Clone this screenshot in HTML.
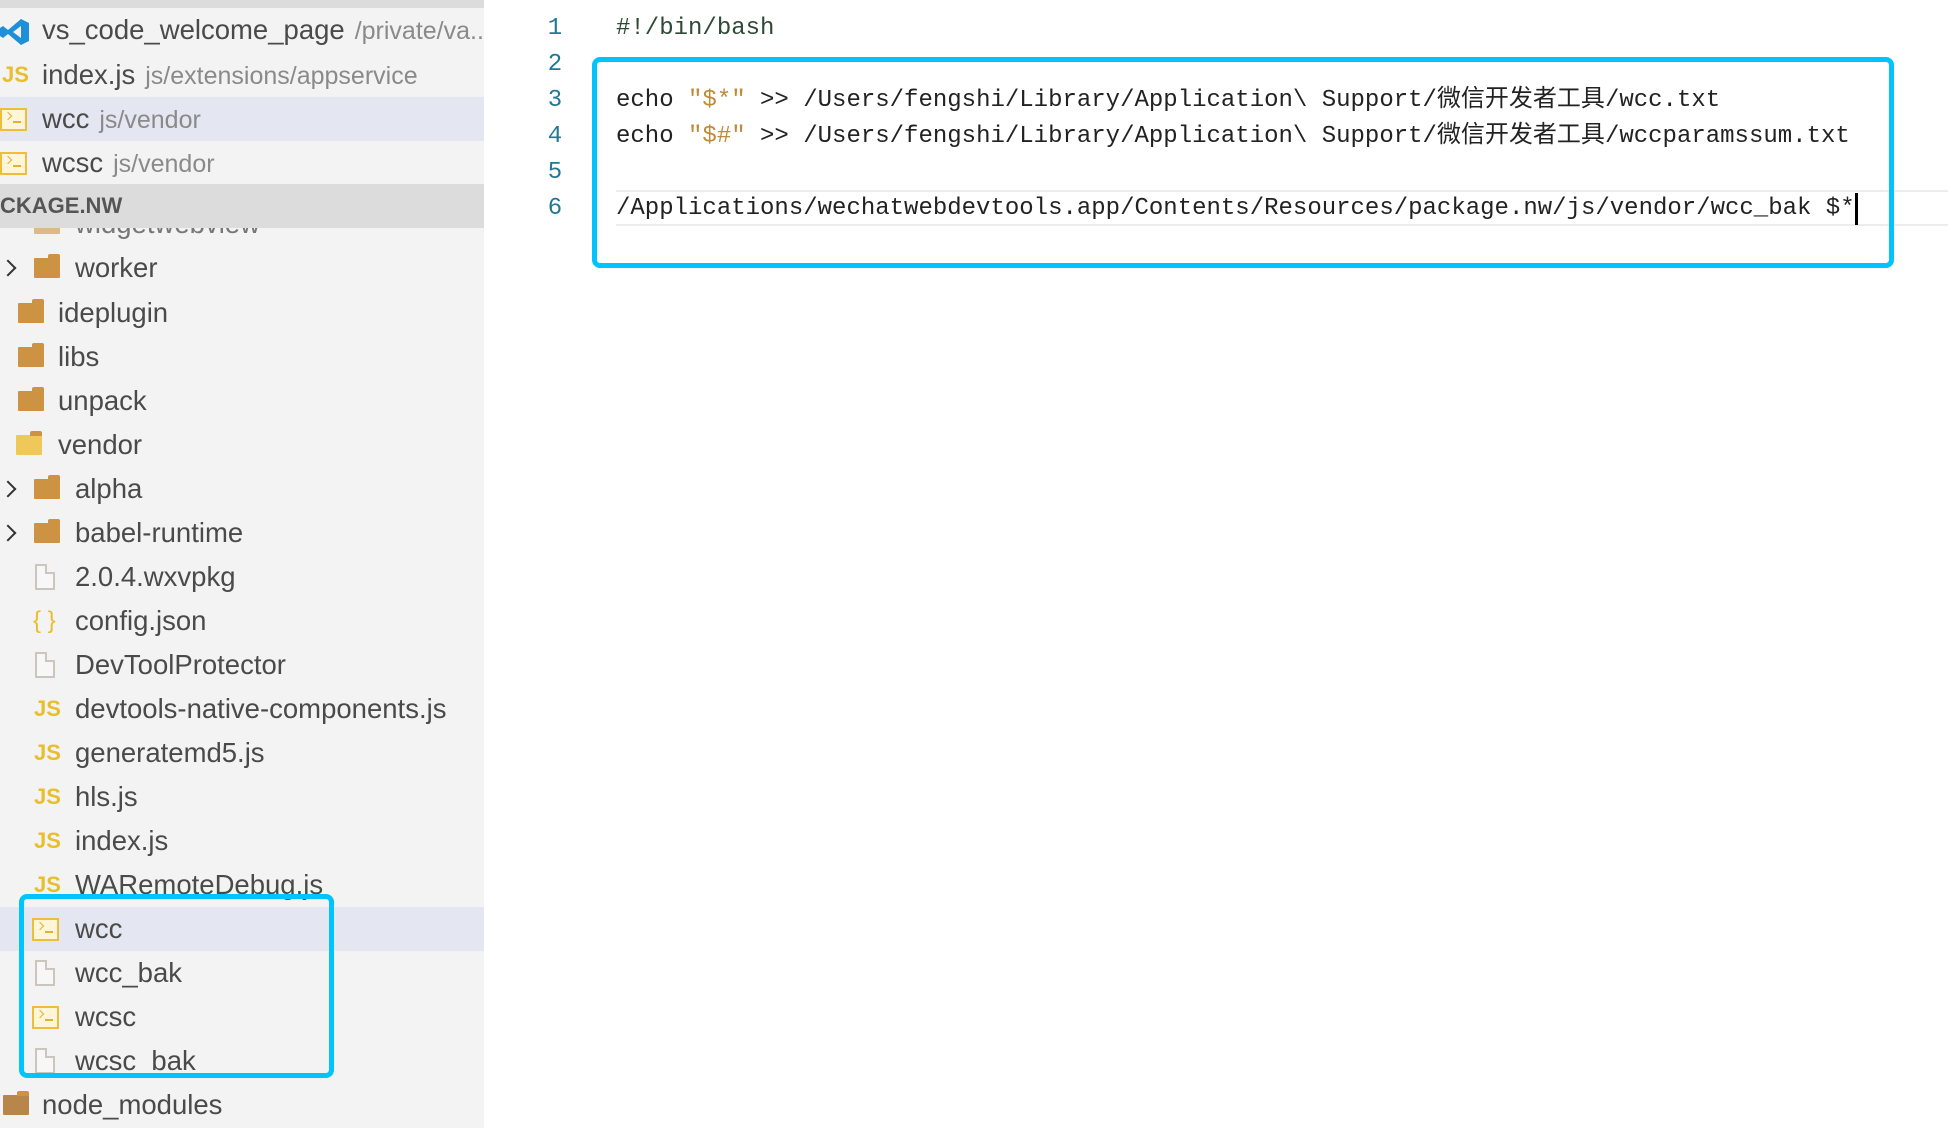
<!DOCTYPE html>
<html><head><meta charset="utf-8">
<style>
*{margin:0;padding:0;box-sizing:border-box}
body{width:1948px;height:1128px;overflow:hidden;background:#fff;font-family:"Liberation Sans","Noto Sans CJK SC",sans-serif;position:relative}
#side{position:absolute;left:0;top:0;width:484px;height:1128px;background:#f3f3f3;overflow:hidden}
.row{position:absolute;left:0;width:484px;height:44px;font-size:27.5px;color:#4a4a4a;line-height:44px;white-space:nowrap}
.row .t{position:absolute;top:0}
.dim{color:#8a8a8a;font-size:25px;margin-left:10px}
.ico{position:absolute}
.sel{background:#e4e6f1}
.chev{position:absolute;left:2px;top:16px;width:12px;height:12px;border-right:2px solid #333;border-top:2px solid #333;transform:rotate(45deg)}
.folder{width:26px;height:20px;top:12px;background:#cd9342;border-radius:1px}
.folder:before{content:"";position:absolute;left:14px;top:-4px;width:12px;height:5px;background:#cd9342;border-radius:2px 2px 0 0}
.file{width:20px;height:26px;top:9px;border:2px solid #cbc6bd;background:#f7f7f7}
.file:after{content:"";position:absolute;right:-2px;top:-2px;width:8px;height:8px;background:#f3f3f3;border-left:2px solid #cbc6bd;border-bottom:2px solid #cbc6bd}
.js{font-weight:bold;color:#e9be2c;font-size:22px;top:0}
.term{width:27px;height:23px;top:11px;border:2px solid #efbd37;background:#fff5d8}
.term:before{content:"";position:absolute;left:3px;top:3px;width:5px;height:5px;border-right:1.5px solid #e6b030;border-bottom:1.5px solid #e6b030;transform:rotate(-45deg)}
.term:after{content:"";position:absolute;left:11px;top:11px;width:8px;height:1.5px;background:#e6b030}
#code{position:absolute;left:0;top:3px;font-family:"Liberation Mono","Noto Sans CJK SC",monospace;font-size:24px}
.ln{position:absolute;left:530px;width:50px;text-align:center;color:#237893;height:36px;line-height:36px}
.cl{position:absolute;left:616px;height:36px;line-height:36px;color:#222;white-space:pre}
.str{color:#c08a36}
.cjk{letter-spacing:0}
</style></head><body>
<div id="side">
  <div style="position:absolute;left:0;top:0;width:484px;height:8px;background:#dcdcdc"></div>
  <div class="row" style="top:8px">
    <svg class="ico" style="left:0;top:9px" width="30" height="30" viewBox="0 0 30 30"><path d="M21 2 L29 6 V24 L21 28 L8 17 L3 21 L0 19 V11 L3 9 L8 13 Z M21 9 L13 15 L21 21 Z" fill="#1e8fd8"/></svg>
    <span class="t" style="left:42px">vs_code_welcome_page<span class="dim">/private/va...</span></span></div>
  <div class="row" style="top:53px"><span class="ico js" style="left:2px">JS</span><span class="t" style="left:42px">index.js<span class="dim">js/extensions/appservice</span></span></div>
  <div class="row sel" style="top:97px"><span class="ico term" style="left:0"></span><span class="t" style="left:42px">wcc<span class="dim">js/vendor</span></span></div>
  <div class="row" style="top:141px"><span class="ico term" style="left:0"></span><span class="t" style="left:42px">wcsc<span class="dim">js/vendor</span></span></div>
  <div class="row" style="top:202px;color:#777"><span class="ico folder" style="left:34px;opacity:.6"></span><span class="t" style="left:75px">widgetwebview</span></div>
  <div style="position:absolute;left:0;top:184px;width:484px;height:44px;background:#dcdcdc;font-weight:bold;font-size:22px;color:#555;line-height:44px">CKAGE.NW</div>

  <div class="row" style="top:246px"><span class="chev"></span><span class="ico folder" style="left:34px"></span><span class="t" style="left:75px">worker</span></div>
  <div class="row" style="top:291px"><span class="ico folder" style="left:18px"></span><span class="t" style="left:58px">ideplugin</span></div>
  <div class="row" style="top:335px"><span class="ico folder" style="left:18px"></span><span class="t" style="left:58px">libs</span></div>
  <div class="row" style="top:379px"><span class="ico folder" style="left:18px"></span><span class="t" style="left:58px">unpack</span></div>
  <div class="row" style="top:423px"><span class="ico folder" style="left:16px;background:#f0c85a"></span><span class="t" style="left:58px">vendor</span></div>
  <div class="row" style="top:467px"><span class="chev"></span><span class="ico folder" style="left:34px"></span><span class="t" style="left:75px">alpha</span></div>
  <div class="row" style="top:511px"><span class="chev"></span><span class="ico folder" style="left:34px"></span><span class="t" style="left:75px">babel-runtime</span></div>
  <div class="row" style="top:555px"><span class="ico file" style="left:35px"></span><span class="t" style="left:75px">2.0.4.wxvpkg</span></div>
  <div class="row" style="top:599px"><span class="ico" style="left:33px;color:#e9be2c;font-size:24px">{ }</span><span class="t" style="left:75px">config.json</span></div>
  <div class="row" style="top:643px"><span class="ico file" style="left:35px"></span><span class="t" style="left:75px">DevToolProtector</span></div>
  <div class="row" style="top:687px"><span class="ico js" style="left:34px">JS</span><span class="t" style="left:75px">devtools-native-components.js</span></div>
  <div class="row" style="top:731px"><span class="ico js" style="left:34px">JS</span><span class="t" style="left:75px">generatemd5.js</span></div>
  <div class="row" style="top:775px"><span class="ico js" style="left:34px">JS</span><span class="t" style="left:75px">hls.js</span></div>
  <div class="row" style="top:819px"><span class="ico js" style="left:34px">JS</span><span class="t" style="left:75px">index.js</span></div>
  <div class="row" style="top:863px"><span class="ico js" style="left:34px">JS</span><span class="t" style="left:75px">WARemoteDebug.js</span></div>
  <div class="row sel" style="top:907px"><span class="ico term" style="left:32px"></span><span class="t" style="left:75px">wcc</span></div>
  <div class="row" style="top:951px"><span class="ico file" style="left:35px"></span><span class="t" style="left:75px">wcc_bak</span></div>
  <div class="row" style="top:995px"><span class="ico term" style="left:32px"></span><span class="t" style="left:75px">wcsc</span></div>
  <div class="row" style="top:1039px"><span class="ico file" style="left:35px"></span><span class="t" style="left:75px">wcsc_bak</span></div>
  <div class="row" style="top:1083px"><span class="ico folder" style="left:3px;background:#b8864a"></span><span class="t" style="left:42px">node_modules</span></div>
  <div style="position:absolute;left:19px;top:894px;width:315px;height:184px;border:5px solid #00c3ff;border-radius:8px"></div>
</div>

<div id="code">
  <div style="position:absolute;left:616px;top:187px;width:1332px;height:36px;border-top:2px solid #ececec;border-bottom:2px solid #ececec"></div>
  <div class="ln" style="top:8px">1</div>
  <div class="ln" style="top:44px">2</div>
  <div class="ln" style="top:80px">3</div>
  <div class="ln" style="top:116px">4</div>
  <div class="ln" style="top:152px">5</div>
  <div class="ln" style="top:188px">6</div>
  <div class="cl" style="top:8px;color:#2e4a36">#!/bin/bash</div>
  <div class="cl" style="top:80px">echo <span class="str">"$*"</span> &gt;&gt; /Users/fengshi/Library/Application\ Support/<span class="cjk">微信开发者工具</span>/wcc.txt</div>
  <div class="cl" style="top:116px">echo <span class="str">"$#"</span> &gt;&gt; /Users/fengshi/Library/Application\ Support/<span class="cjk">微信开发者工具</span>/wccparamssum.txt</div>
  <div class="cl" style="top:188px">/Applications/wechatwebdevtools.app/Contents/Resources/package.nw/js/vendor/wcc_bak $*</div>
  <div style="position:absolute;left:1855px;top:190px;width:3px;height:32px;background:#000"></div>
  <div style="position:absolute;left:592px;top:54px;width:1302px;height:211px;border:5px solid #00c3ff;border-radius:8px"></div>
</div>
</body></html>
